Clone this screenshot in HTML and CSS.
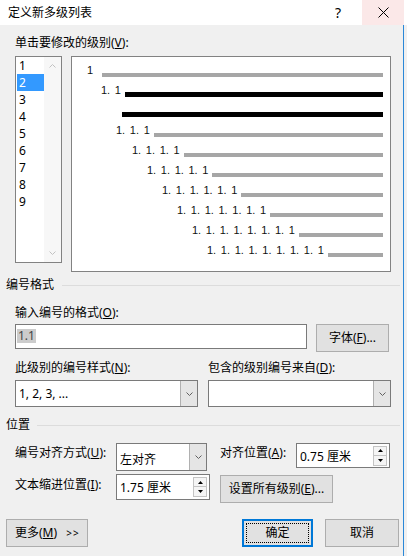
FILE: index.html
```html
<!DOCTYPE html>
<html lang="zh-CN">
<head>
    <meta charset="UTF-8" />
    <title>定义新多级列表</title>
    <link rel="stylesheet" href="styles.css">
</head>
<body>
    <div class="titlebar">
        <span class="title">定义新多级列表</span>
        <span class="help">?</span>
        <span class="close">
            <svg width="11" height="11" viewBox="0 0 11 11"><path d="M0.5 0.5L10.5 10.5M10.5 0.5L0.5 10.5" stroke="#000" stroke-width="1" fill="none"/></svg>
        </span>
    </div>

    <div class="dialog">
        <div class="label">单击要修改的级别(<u>V</u>):</div>

        <div class="level-pick">
            <div class="listbox">
                <ul class="items">
                    <li>1</li>
                    <li class="selected">2</li>
                    <li>3</li>
                    <li>4</li>
                    <li>5</li>
                    <li>6</li>
                    <li>7</li>
                    <li>8</li>
                    <li>9</li>
                </ul>
                <div class="scrollbar">
                    <svg width="7" height="4" viewBox="0 0 7 4"><polyline points="0.5,3.5 3.5,0.5 6.5,3.5" stroke="#c2c2c2" fill="none"/></svg>
                    <svg width="7" height="4" viewBox="0 0 7 4"><polyline points="0.5,0.5 3.5,3.5 6.5,0.5" stroke="#c2c2c2" fill="none"/></svg>
                </div>
            </div>

            <div class="preview">
                <div class="pv-row l1"><span class="num">1</span><span class="bar"></span></div>
                <div class="pv-row l2"><span class="num">1. 1</span><span class="bar dark"></span></div>
                <div class="pv-row l2-cont"><span class="bar dark"></span></div>
                <div class="pv-row l3"><span class="num">1. 1. 1</span><span class="bar"></span></div>
                <div class="pv-row l4"><span class="num">1. 1. 1. 1</span><span class="bar"></span></div>
                <div class="pv-row l5"><span class="num">1. 1. 1. 1. 1</span><span class="bar"></span></div>
                <div class="pv-row l6"><span class="num">1. 1. 1. 1. 1. 1</span><span class="bar"></span></div>
                <div class="pv-row l7"><span class="num">1. 1. 1. 1. 1. 1. 1</span><span class="bar"></span></div>
                <div class="pv-row l8"><span class="num">1. 1. 1. 1. 1. 1. 1. 1</span><span class="bar"></span></div>
                <div class="pv-row l9"><span class="num">1. 1. 1. 1. 1. 1. 1. 1. 1</span><span class="bar"></span></div>
            </div>
        </div>

        <div class="group"><span>编号格式</span></div>

        <div class="label gap-14">输入编号的格式(<u>O</u>):</div>
        <div class="input-row">
            <div class="textbox format"><span class="sel">1.1</span></div>
            <button class="btn font-btn">字体(<u>F</u>)...</button>
        </div>

        <div class="pair labels-row">
            <div class="label">此级别的编号样式(<u>N</u>):</div>
            <div class="label">包含的级别编号来自(<u>D</u>):</div>
        </div>
        <div class="pair combos-row">
            <div class="combo wide">
                <span class="value">1, 2, 3, ...</span>
                <span class="drop"><svg width="7" height="4" viewBox="0 0 7 4"><polyline points="0.5,0.5 3.5,3.5 6.5,0.5" stroke="#606060" fill="none"/></svg></span>
            </div>
            <div class="combo wide">
                <span class="value"></span>
                <span class="drop"><svg width="7" height="4" viewBox="0 0 7 4"><polyline points="0.5,0.5 3.5,3.5 6.5,0.5" stroke="#606060" fill="none"/></svg></span>
            </div>
        </div>

        <div class="group pos"><span>位置</span></div>

        <div class="pos-grid">
            <div class="label row-a">编号对齐方式(<u>U</u>):</div>
            <div class="combo align">
                <span class="value">左对齐</span>
                <span class="drop"><svg width="7" height="4" viewBox="0 0 7 4"><polyline points="0.5,0.5 3.5,3.5 6.5,0.5" stroke="#606060" fill="none"/></svg></span>
            </div>
            <div class="label row-a">对齐位置(<u>A</u>):</div>
            <div class="spin">
                <span class="value">0.75 厘米</span>
                <span class="spin-btns">
                    <span class="sb"><svg width="5" height="3" viewBox="0 0 5 3"><polygon points="0,3 2.5,0 5,3" fill="#000"/></svg></span>
                    <span class="sb"><svg width="5" height="3" viewBox="0 0 5 3"><polygon points="0,0 2.5,3 5,0" fill="#000"/></svg></span>
                </span>
            </div>

            <div class="label row-b">文本缩进位置(<u>I</u>):</div>
            <div class="spin indent">
                <span class="value">1.75 厘米</span>
                <span class="spin-btns">
                    <span class="sb"><svg width="5" height="3" viewBox="0 0 5 3"><polygon points="0,3 2.5,0 5,3" fill="#000"/></svg></span>
                    <span class="sb"><svg width="5" height="3" viewBox="0 0 5 3"><polygon points="0,0 2.5,3 5,0" fill="#000"/></svg></span>
                </span>
            </div>
            <button class="btn all-levels">设置所有级别(<u>E</u>)...</button>
        </div>

        <div class="footer">
            <button class="btn more">更多(<u>M</u>) <span class="arrows">&gt;&gt;</span></button>
            <button class="btn ok"><span class="focus">确定</span></button>
            <button class="btn cancel">取消</button>
        </div>
    </div>
</body>
</html>
```

FILE: styles.css
```css
* {
    margin: 0;
    padding: 0;
    box-sizing: border-box;
}

html, body {
    background: #f0f0f0;
}

body {
    width: 407px;
    height: 556px;
    overflow: hidden;
    font-family: "Noto Sans", "Noto Sans CJK SC", sans-serif;
    font-size: 12px;
    color: #000;
}

u {
    text-decoration: underline;
    text-underline-offset: 1px;
}

/* title bar */
.titlebar {
    height: 25px;
    background: #fff;
    display: flex;
    align-items: center;
}

.title {
    flex: 1;
    padding-left: 8px;
    line-height: 14px;
    font-size: 12px;
}

.help {
    width: 20px;
    margin-right: 14px;
    text-align: center;
    font-size: 14px;
    line-height: 14px;
}

.close {
    width: 42px;
    height: 25px;
    margin-right: 3px;
    background: #fbe8e8;
    display: flex;
    align-items: center;
    justify-content: center;
}

/* dialog body */
.dialog {
    width: 404px;
    height: 531px;
    border-right: 1px solid #2b88d8;
    padding: 11px 0 0 15px;
}

.label {
    height: 14px;
    line-height: 14px;
    white-space: nowrap;
}

.gap-14 {
    margin-top: 14px;
}

.level-pick {
    display: flex;
    align-items: flex-start;
    margin-top: 6px;
    height: 216px;
}

.listbox {
    width: 47px;
    height: 207px;
    border: 1px solid #828282;
    background: #fff;
    display: flex;
}

.items {
    list-style: none;
    width: 28px;
    padding-left: 1px;
}

.items li {
    height: 17px;
    line-height: 17px;
    padding-left: 2px;
}

.items .selected {
    background: #3399ff;
    color: #fff;
}

.scrollbar {
    width: 17px;
    background: #f7f7f7;
    display: flex;
    flex-direction: column;
    justify-content: space-between;
    align-items: center;
    padding: 7px 0;
}

.scrollbar svg {
    display: block;
}

.preview {
    width: 320px;
    height: 216px;
    margin-left: 9px;
    border: 1px solid #828282;
    background: #fff;
}

.pv-row {
    height: 20px;
    display: flex;
    align-items: flex-end;
    padding-right: 7px;
}

.num {
    font-family: "Liberation Sans", Arial, sans-serif;
    font-size: 11px;
    line-height: 11px;
    margin-bottom: 1px;
    margin-right: 4px;
    word-spacing: 1.6px;
    white-space: pre;
    color: #111;
}

.bar {
    flex: 1;
    height: 4px;
    background: #a6a6a6;
}

.bar.dark {
    height: 5px;
    background: #000;
}

.l1 { padding-left: 15px; }
.l1 .num { margin-right: 9px; }
.l2 { padding-left: 29px; }
.l2-cont { padding-left: 50px; }
.l3 { padding-left: 44px; }
.l4 { padding-left: 60px; }
.l5 { padding-left: 75px; }
.l6 { padding-left: 90px; }
.l7 { padding-left: 105px; }
.l8 { padding-left: 120px; }
.l9 { padding-left: 135px; }

/* group titles */
.group {
    display: flex;
    align-items: center;
    height: 14px;
    line-height: 14px;
    margin: 6px 0 0 -9px;
}

.group::after {
    content: "";
    flex: 1;
    height: 1px;
    background: #dcdcdc;
    margin: 0 3px 0 8px;
}

.group.pos {
    margin-top: 11px;
}

.group.pos::after {
    margin-left: 7px;
}

/* inputs */
.input-row {
    display: flex;
    align-items: flex-start;
    margin-top: 4px;
}

.textbox {
    width: 292px;
    height: 25px;
    border: 1px solid #7a7a7a;
    background: #fff;
    padding: 2px 0 0 1px;
}

.sel {
    display: inline-block;
    background: #cccccc;
    color: #444;
    line-height: 14px;
    padding: 0 1px;
}

.btn {
    font-family: "Noto Sans", "Noto Sans CJK SC", sans-serif;
    font-size: 12px;
    color: #000;
    background: #e1e1e1;
    border: 1px solid #adadad;
    height: 28px;
    line-height: 14px;
}

.font-btn {
    width: 73px;
    margin-left: 9px;
}

.pair {
    display: grid;
    grid-template-columns: 193px 182px;
}

.labels-row {
    margin-top: 9px;
}

.combos-row {
    margin-top: 5px;
}

.combo {
    height: 27px;
    border: 1px solid #7a7a7a;
    background: #fff;
    display: flex;
}

.combo.wide {
    width: 183px;
}

.combo .value,
.spin .value {
    flex: 1;
    padding-left: 3px;
    display: flex;
    align-items: center;
    white-space: nowrap;
}

.drop {
    width: 17px;
    background: #e5e5e5;
    border-left: 1px solid #b0b0b0;
    display: flex;
    align-items: center;
    justify-content: center;
}

.pos-grid {
    display: grid;
    grid-template-columns: 101px 104px 76px 94px;
    row-gap: 3px;
    align-items: start;
    margin-top: 11px;
}

.row-a {
    margin-top: 3px;
}

.row-b {
    margin-top: 4px;
}

.combo.align {
    width: 91px;
    height: 28px;
}

.combo.align .value {
    padding-top: 4px;
}

.spin {
    width: 94px;
    height: 25px;
    border: 1px solid #7a7a7a;
    background: #fff;
    display: flex;
}

.spin.indent {
    height: 26px;
}

.spin-btns {
    width: 17px;
    display: flex;
    flex-direction: column;
    justify-content: center;
    padding: 0 2px 0 1px;
}

.sb {
    height: 10px;
    border: 1px solid #c4c4c4;
    background: #f5f5f5;
    display: flex;
    align-items: center;
    justify-content: center;
}

.sb + .sb {
    border-top: none;
}

.all-levels {
    grid-column: 3 / 5;
    width: 113px;
    margin-top: 1px;
}

/* footer buttons */
.footer {
    display: flex;
    margin-top: 16px;
}

.more {
    width: 82px;
    margin-left: -9px;
    text-align: left;
    padding-left: 8px;
}

.arrows {
    font-size: 10px;
    margin-left: 6px;
    letter-spacing: 1px;
}

.ok {
    width: 71px;
    margin-left: 154px;
    border: 2px solid #0078d7;
    padding: 2px;
}

.focus {
    display: flex;
    align-items: center;
    justify-content: center;
    height: 100%;
    border: 1px dotted #000;
}

.cancel {
    width: 74px;
    margin-left: 12px;
}
```
